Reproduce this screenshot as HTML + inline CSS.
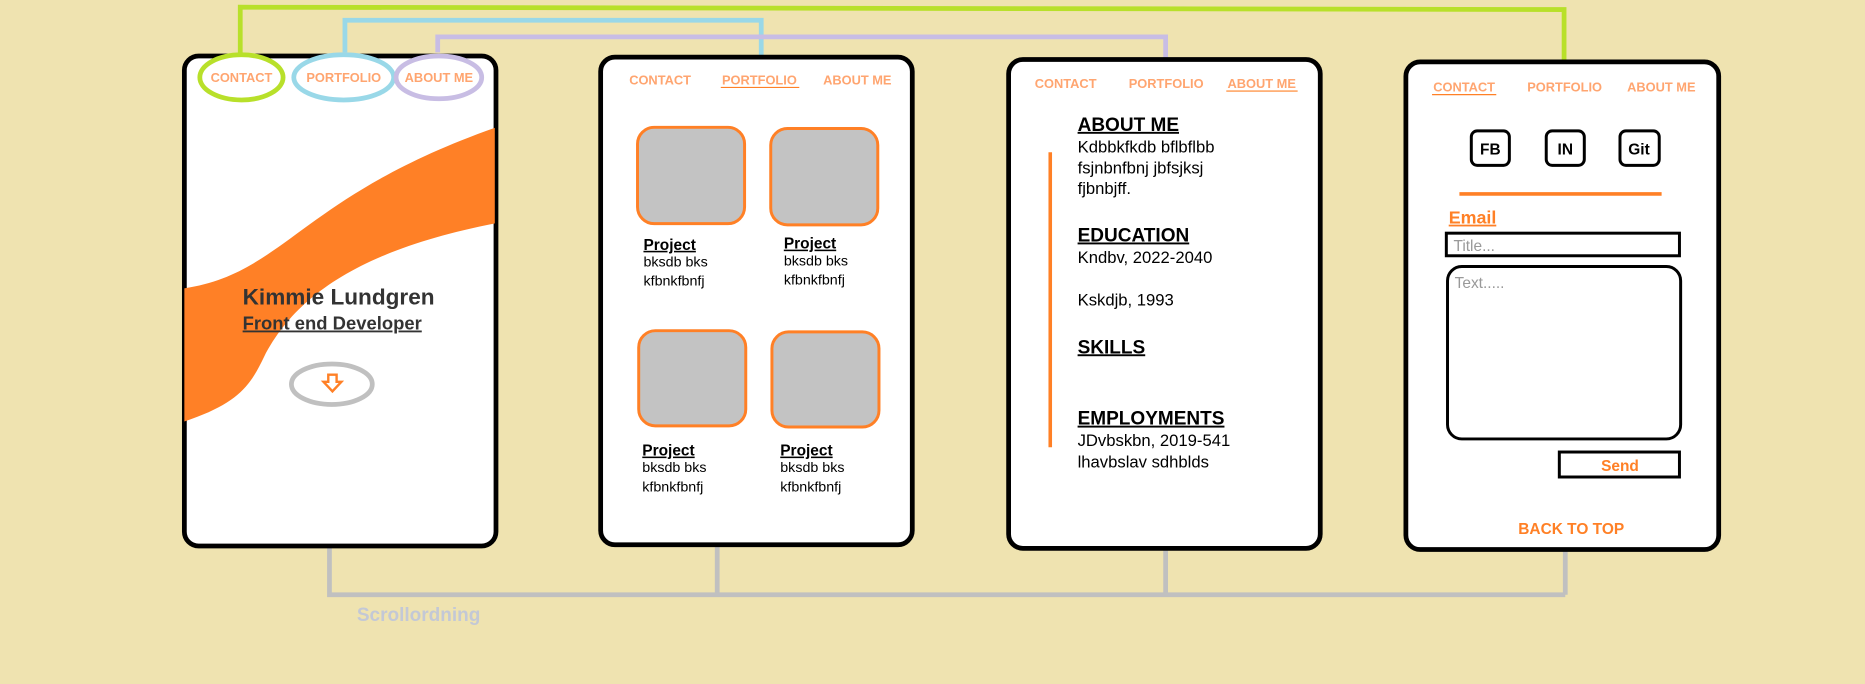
<!DOCTYPE html>
<html><head><meta charset="utf-8"><style>
html,body{margin:0;padding:0;background:#EFE3B0;overflow:hidden}
svg{display:block}
text{font-family:"Liberation Sans",Arial,sans-serif}
</style></head><body>
<svg width="1865" height="684" viewBox="0 0 1568 575" xmlns="http://www.w3.org/2000/svg">
<rect width="1568" height="575" fill="#EFE3B0"/>
<defs><clipPath id="c1"><rect x="155" y="47" width="261" height="411" rx="11"/></clipPath></defs>
<!-- connectors -->
<polyline points="202,46 202,6 1315,8 1315,51" fill="none" stroke="#B8E02A" stroke-width="4"/>
<polyline points="290,44 290,17 640,17 640,47" fill="none" stroke="#99D8E8" stroke-width="4"/>
<polyline points="368,44 368,31 980,31 980,49" fill="none" stroke="#C8BDE4" stroke-width="4"/>
<polyline points="277,340 277,500 1316,500" fill="none" stroke="#C0C0C0" stroke-width="4"/>
<line x1="603" y1="459" x2="603" y2="500" stroke="#C0C0C0" stroke-width="4"/>
<line x1="980" y1="462" x2="980" y2="500" stroke="#C0C0C0" stroke-width="4"/>
<line x1="1316" y1="463" x2="1316" y2="500" stroke="#C0C0C0" stroke-width="4"/>
<text x="300" y="522" font-size="16" font-weight="bold" fill="#C3C8D6">Scrollordning</text>

<!-- panel 1 -->
<rect x="155" y="47" width="262" height="412" rx="12" fill="#fff" stroke="#000" stroke-width="4"/>
<path clip-path="url(#c1)" d="M150,243 C240,232 250,165 420,106 L420,187 C310,208 250,245 222,300 C210,325 200,340 150,356 Z" fill="#FF8026"/>
<ellipse cx="203" cy="65" rx="35" ry="19" fill="#fff" stroke="#B8E02A" stroke-width="4"/>
<ellipse cx="289" cy="65" rx="42" ry="19" fill="#fff" stroke="#99D8E8" stroke-width="4"/>
<ellipse cx="369" cy="65" rx="36" ry="18" fill="#fff" stroke="#C8BDE4" stroke-width="4"/>
<g font-size="10.8" font-weight="bold" fill="#FFA570">
<text x="203" y="69" text-anchor="middle">CONTACT</text>
<text x="289" y="69" text-anchor="middle">PORTFOLIO</text>
<text x="369" y="69" text-anchor="middle">ABOUT ME</text>
</g>
<text x="204" y="256" font-size="19" font-weight="bold" fill="#333">Kimmie Lundgren</text>
<text x="204" y="277" font-size="15.5" font-weight="bold" fill="#333" text-decoration="underline">Front end Developer</text>
<ellipse cx="279" cy="323" rx="34" ry="17" fill="#fff" stroke="#C0C0C0" stroke-width="4"/>
<path d="M276,315 h7 v6 h4 l-7.5,8 l-7.5,-8 h4 z" fill="#fff" stroke="#FF8026" stroke-width="2"/>

<!-- panel 2 -->
<rect x="505" y="48" width="262" height="410" rx="12" fill="#fff" stroke="#000" stroke-width="4"/>
<g font-size="10.8" font-weight="bold" fill="#FFA570">
<text x="529" y="71">CONTACT</text>
<text x="607" y="71">PORTFOLIO</text>
<text x="692" y="71">ABOUT ME</text>
</g>
<line x1="606" y1="73.5" x2="672" y2="73.5" stroke="#FF8026" stroke-width="1"/>
<g fill="#C3C3C3" stroke="#FF8026" stroke-width="2.5">
<rect x="536" y="107" width="90" height="81" rx="14"/>
<rect x="648" y="108" width="90" height="81" rx="14"/>
<rect x="537" y="278" width="90" height="80" rx="14"/>
<rect x="649" y="279" width="90" height="80" rx="14"/>
</g>
<g font-size="12" fill="#000">
<text x="541" y="210" font-size="13" font-weight="bold" text-decoration="underline">Project</text>
<text x="541" y="224">bksdb bks</text><text x="541" y="240">kfbnkfbnfj</text>
<text x="659" y="209" font-size="13" font-weight="bold" text-decoration="underline">Project</text>
<text x="659" y="223">bksdb bks</text><text x="659" y="239">kfbnkfbnfj</text>
<text x="540" y="383" font-size="13" font-weight="bold" text-decoration="underline">Project</text>
<text x="540" y="397">bksdb bks</text><text x="540" y="413">kfbnkfbnfj</text>
<text x="656" y="383" font-size="13" font-weight="bold" text-decoration="underline">Project</text>
<text x="656" y="397">bksdb bks</text><text x="656" y="413">kfbnkfbnfj</text>
</g>

<!-- panel 3 -->
<rect x="848" y="50" width="262" height="411" rx="12" fill="#fff" stroke="#000" stroke-width="4"/>
<g font-size="10.8" font-weight="bold" fill="#FFA570">
<text x="870" y="74">CONTACT</text>
<text x="949" y="74">PORTFOLIO</text>
<text x="1032" y="74">ABOUT ME</text>
</g>
<line x1="1031" y1="76.5" x2="1091" y2="76.5" stroke="#FF8026" stroke-width="1"/>
<line x1="883" y1="128" x2="883" y2="376" stroke="#FF8026" stroke-width="3"/>
<g fill="#000" font-size="14">
<text x="906" y="110" font-size="16" font-weight="bold" text-decoration="underline">ABOUT ME</text>
<text x="906" y="128">Kdbbkfkdb bflbflbb</text>
<text x="906" y="146">fsjnbnfbnj jbfsjksj</text>
<text x="906" y="163">fjbnbjff.</text>
<text x="906" y="203" font-size="16" font-weight="bold" text-decoration="underline">EDUCATION</text>
<text x="906" y="221">Kndbv, 2022-2040</text>
<text x="906" y="257">Kskdjb, 1993</text>
<text x="906" y="297" font-size="16" font-weight="bold" text-decoration="underline">SKILLS</text>
<text x="906" y="357" font-size="16" font-weight="bold" text-decoration="underline">EMPLOYMENTS</text>
<text x="906" y="375">JDvbskbn, 2019-541</text>
<text x="906" y="393">lhavbslav sdhblds</text>
</g>

<!-- panel 4 -->
<rect x="1182" y="52" width="263" height="410" rx="12" fill="#fff" stroke="#000" stroke-width="4"/>
<g font-size="10.8" font-weight="bold" fill="#FFA570">
<text x="1205" y="77">CONTACT</text>
<text x="1284" y="77">PORTFOLIO</text>
<text x="1368" y="77">ABOUT ME</text>
</g>
<line x1="1204" y1="79.5" x2="1258" y2="79.5" stroke="#FF8026" stroke-width="1"/>
<g fill="#fff" stroke="#000" stroke-width="2.5">
<rect x="1237" y="110" width="32" height="29" rx="5"/>
<rect x="1300" y="110" width="32" height="29" rx="5"/>
<rect x="1362" y="110" width="33" height="29" rx="5"/>
</g>
<g font-size="13" font-weight="bold" fill="#000" text-anchor="middle">
<text x="1253" y="130">FB</text><text x="1316" y="130">IN</text><text x="1378" y="130">Git</text>
</g>
<line x1="1227" y1="163" x2="1397" y2="163" stroke="#FF8026" stroke-width="3"/>
<text x="1218" y="188" font-size="15" font-weight="bold" fill="#FF8026" text-decoration="underline">Email</text>
<rect x="1216" y="196" width="196" height="19" fill="#fff" stroke="#000" stroke-width="2.5"/>
<text x="1222" y="211" font-size="13" fill="#999">Title...</text>
<rect x="1217" y="224" width="196" height="145" rx="12" fill="#fff" stroke="#000" stroke-width="2.5"/>
<text x="1223" y="242" font-size="13" fill="#999">Text.....</text>
<rect x="1311" y="380" width="101" height="21" fill="#fff" stroke="#000" stroke-width="2.5"/>
<text x="1362" y="396" font-size="13" font-weight="bold" fill="#FF8026" text-anchor="middle">Send</text>
<text x="1321" y="449" font-size="13" font-weight="bold" fill="#FF8026" text-anchor="middle">BACK TO TOP</text>
</svg>
</body></html>
